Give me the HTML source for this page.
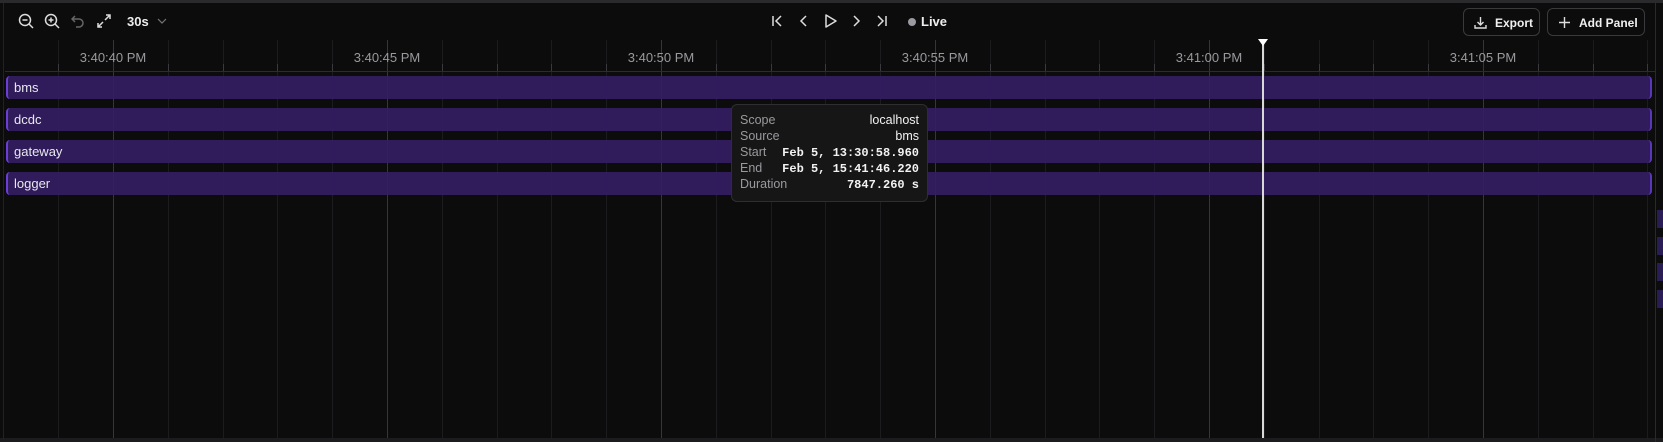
<!DOCTYPE html>
<html><head><meta charset="utf-8"><style>
*{margin:0;padding:0;box-sizing:border-box}
body{width:1663px;height:442px;background:#0c0c0d;overflow:hidden;position:relative;font-family:"Liberation Sans",sans-serif;color:#e6e6e6}
.a{position:absolute}
.vl{position:absolute;top:40px;bottom:4px;width:1px;background:#1c1c1f}
.vm{background:#36363a}
.tk{position:absolute;top:64px;height:7px;width:1px;background:#3a3a3e}
.lab{position:absolute;top:50px;font-size:13px;color:#9a9a9e;width:120px;text-align:center}
.bar{position:absolute;left:6px;width:1646px;height:23px;background:rgba(52,30,100,0.9);border-left:2px solid #6a3fd6;border-right:2px solid #5a36b8;border-radius:4px;font-size:13px;color:#e8e8ee;padding:4px 0 0 6px}
.btn{position:absolute;top:8px;height:28px;border:1px solid #3a3a3e;border-radius:6px;font-size:12px;font-weight:bold;color:#f0f0f0;padding:7px 0 0 0}
.ic{position:absolute;top:13px}
.tt{position:absolute;left:731px;top:104px;width:197px;height:98px;background:#161617;border:1px solid #2e2e31;border-radius:6px;font-size:12.5px}
.row{position:absolute;left:8px;right:8px;height:16px}
.row .k{color:#9a9a9e;position:absolute;left:0}
.row .v{position:absolute;right:0;color:#f2f2f2}
.mono{font-family:"Liberation Mono",monospace;font-weight:bold;font-size:12px;top:1px}
</style></head><body>
<div class="a" style="left:0;top:0;width:1663px;height:3px;background:#2a2a2c"></div>
<div class="a" style="left:0;top:438px;width:1663px;height:4px;background:#1c1c1e"></div>
<div class="a" style="left:3px;top:3px;width:1px;height:436px;background:#222"></div>
<div class="a" style="left:1655px;top:0;width:1px;height:442px;background:#2a2a2c"></div>

<div id="g"></div>
<script>
var h='';for(var i=-2;i<30;i++){var x=Math.round(113+i*54.8);if(x<5||x>1653)continue;var m=(i%5==0);h+='<div class="vl'+(m?' vm':'')+'" style="left:'+x+'px"></div>';if(!m)h+='<div class="tk" style="left:'+x+'px"></div>';}
var L=['3:40:40 PM','3:40:45 PM','3:40:50 PM','3:40:55 PM','3:41:00 PM','3:41:05 PM'];
for(var j=0;j<6;j++){h+='<div class="lab" style="left:'+(113+j*274-60)+'px">'+L[j]+'</div>';}
document.getElementById('g').innerHTML=h;
</script>
<div class="a" style="left:5px;top:71px;width:1650px;height:1px;background:#2c2c30"></div>

<div class="bar" style="top:76px">bms</div>
<div class="bar" style="top:108px">dcdc</div>
<div class="bar" style="top:140px">gateway</div>
<div class="bar" style="top:172px">logger</div>

<div class="a" style="left:1657px;top:210px;width:6px;height:18px;background:#2a1d55"></div>
<div class="a" style="left:1657px;top:237px;width:6px;height:18px;background:#2a1d55"></div>
<div class="a" style="left:1657px;top:263px;width:6px;height:18px;background:#2a1d55"></div>
<div class="a" style="left:1657px;top:290px;width:6px;height:18px;background:#2a1d55"></div>

<div class="a" style="left:1262px;top:42px;width:2px;height:396px;background:#d8d8d8"></div>
<svg class="a" style="left:1258px;top:39px" width="10" height="8"><path d="M0 0H10L5 7Z" fill="#fff"/></svg>

<svg class="ic" style="left:18px" width="16" height="16" viewBox="0 0 16 16" fill="none" stroke="#ddd" stroke-width="1.5"><circle cx="7" cy="7" r="5.5"/><path d="M4.5 7h5M11 11l4 4"/></svg>
<svg class="ic" style="left:44px" width="16" height="16" viewBox="0 0 16 16" fill="none" stroke="#ddd" stroke-width="1.5"><circle cx="7" cy="7" r="5.5"/><path d="M4.5 7h5M7 4.5v5M11 11l4 4"/></svg>
<svg class="ic" style="left:71px" width="14" height="16" viewBox="0 0 14 16" fill="none" stroke="#666" stroke-width="1.5"><path d="M4 3L1 6l3 3M1 6h7a4 4 0 010 8H5"/></svg>
<svg class="ic" style="left:96px" width="16" height="16" viewBox="0 0 16 16" fill="none" stroke="#ddd" stroke-width="1.5"><path d="M10 2h4v4M14 2l-5 5M6 14H2v-4M2 14l5-5"/></svg>
<div class="a" style="left:127px;top:14px;font-size:13px;font-weight:bold;color:#eee">30s</div>
<svg class="a" style="left:157px;top:18px" width="10" height="6"><path d="M1 1l4 4 4-4" stroke="#777" fill="none" stroke-width="1.2"/></svg>

<svg class="ic" style="left:771px" width="12" height="16" viewBox="0 0 12 16" fill="none" stroke="#ddd" stroke-width="1.5"><path d="M2 3v10M10 3L5 8l5 5"/></svg>
<svg class="ic" style="left:799px" width="10" height="16" viewBox="0 0 10 16" fill="none" stroke="#ddd" stroke-width="1.5"><path d="M7 3L2 8l5 5"/></svg>
<svg class="ic" style="left:824px" width="14" height="16" viewBox="0 0 14 16" fill="none" stroke="#ddd" stroke-width="1.5"><path d="M2 2v12l10-6z" stroke-linejoin="round"/></svg>
<svg class="ic" style="left:851px" width="10" height="16" viewBox="0 0 10 16" fill="none" stroke="#ddd" stroke-width="1.5"><path d="M3 3l5 5-5 5"/></svg>
<svg class="ic" style="left:876px" width="12" height="16" viewBox="0 0 12 16" fill="none" stroke="#ddd" stroke-width="1.5"><path d="M10 3v10M2 3l5 5-5 5"/></svg>
<div class="a" style="left:908px;top:18px;width:8px;height:8px;border-radius:50%;background:#9a9aa0"></div>
<div class="a" style="left:921px;top:14px;font-size:13px;font-weight:bold;color:#eee">Live</div>

<div class="btn" style="left:1463px;width:77px"><svg class="a" style="left:9px;top:6px" width="15" height="15" viewBox="0 0 15 15" fill="none" stroke="#ddd" stroke-width="1.4"><path d="M7.5 2v8M4.5 7l3 3 3-3M2 10v3h11v-3"/></svg><span style="position:absolute;left:31px">Export</span></div>
<div class="btn" style="left:1547px;width:98px"><svg class="a" style="left:10px;top:7px" width="13" height="13" viewBox="0 0 13 13" stroke="#ddd" stroke-width="1.4"><path d="M6.5 1v11M1 6.5h11"/></svg><span style="position:absolute;left:31px">Add Panel</span></div>

<div class="tt">
<div class="row" style="top:8px"><span class="k">Scope</span><span class="v">localhost</span></div>
<div class="row" style="top:24px"><span class="k">Source</span><span class="v">bms</span></div>
<div class="row" style="top:40px"><span class="k">Start</span><span class="v mono">Feb 5, 13:30:58.960</span></div>
<div class="row" style="top:56px"><span class="k">End</span><span class="v mono">Feb 5, 15:41:46.220</span></div>
<div class="row" style="top:72px"><span class="k">Duration</span><span class="v mono">7847.260 s</span></div>
</div>
</body></html>
